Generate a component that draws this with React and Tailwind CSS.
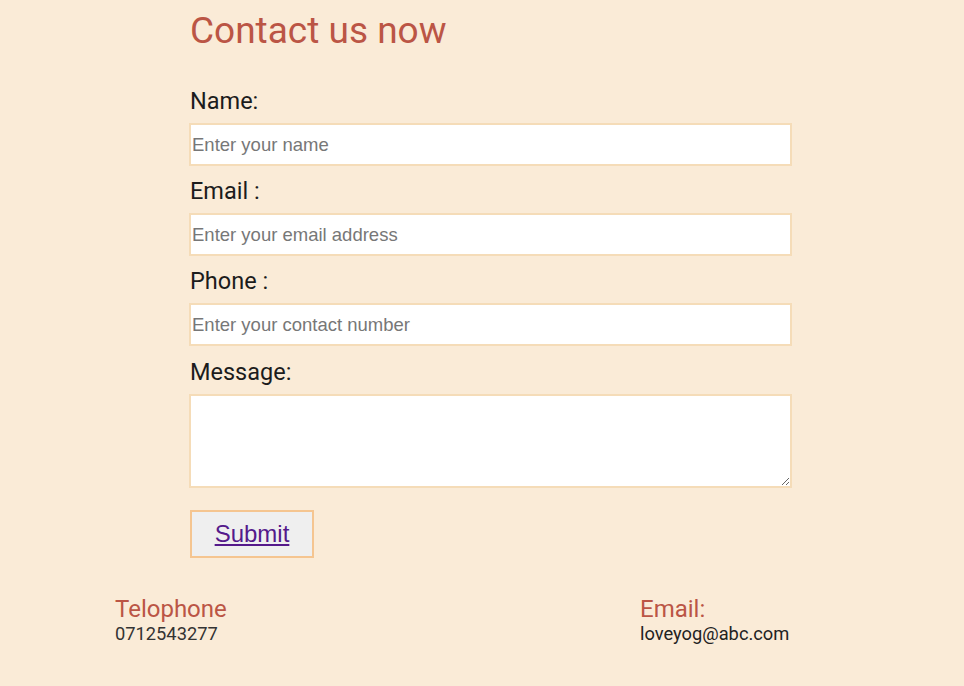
export default function App() {
  const fields = [
    { label: "Name:", ph: "Enter your name" },
    { label: "Email :", ph: "Enter your email address" },
    { label: "Phone :", ph: "Enter your contact number" },
  ];
  return (
    <div className="min-h-[686px] w-full bg-[#faebd7] font-['Roboto',sans-serif] pt-[10px]">
      <div className="ml-[189px] w-[603px]">
        <h1 className="ml-[1px] text-[37px] leading-[42px] text-[#bb5545] font-normal">Contact us now</h1>
        <form className="mt-[36px]" onSubmit={(e) => e.preventDefault()}>
          {fields.map((f, i) => (
            <div key={f.label} className={i === 0 ? "" : "mt-[12px]"}>
              <label className="block ml-[1px] text-[23.5px] leading-[26px] text-[#1c1c1c]">{f.label}</label>
              <input
                type="text"
                placeholder={f.ph}
                className="mt-[9px] block w-full h-[43px] bg-white border-2 border-[#f5dcb8] px-[1px] text-[18.5px] font-['Liberation_Sans',Arial,sans-serif] text-[#222] placeholder:text-[#777] outline-none"
              />
            </div>
          ))}
          <div className="mt-[13px]">
            <label className="block ml-[1px] text-[23.5px] leading-[26px] text-[#1c1c1c]">Message:</label>
            <textarea className="mt-[9px] block w-full h-[94px] bg-white border-2 border-[#f5dcb8] outline-none resize-y" />
          </div>
          <button
            type="submit"
            className="mt-[22px] ml-[1px] block w-[124px] h-[48px] bg-[#efefef] border-2 border-[#f5c590] text-[24px] font-['Liberation_Sans',Arial,sans-serif] text-[#551a8b] underline"
          >
            Submit
          </button>
        </form>
      </div>
      <div className="flex pl-[115px] mt-[37px]">
        <div className="w-[525px]">
          <div className="text-[24px] leading-[28px] text-[#bb5545]">Telophone</div>
          <div className="text-[18.3px] leading-[22px] text-[#333]">0712543277</div>
        </div>
        <div>
          <div className="text-[24px] leading-[28px] text-[#bb5545]">Email:</div>
          <div className="text-[18.3px] leading-[22px] text-[#222]">loveyog@abc.com</div>
        </div>
      </div>
    </div>
  );
}
